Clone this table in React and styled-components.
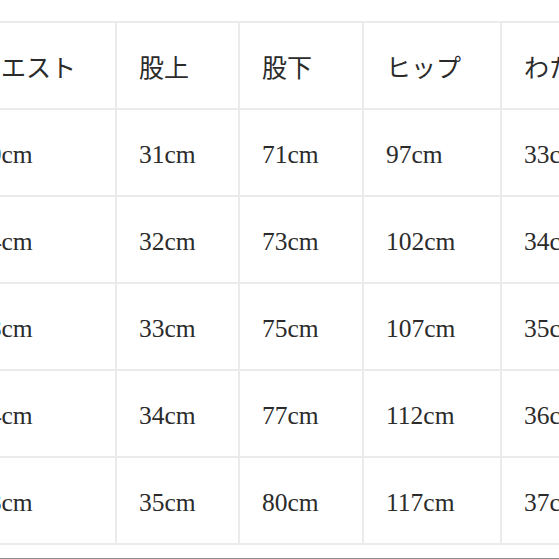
import React from "react";
import styled, { createGlobalStyle } from "styled-components";

const GlobalStyle = createGlobalStyle`
    html, body {
        margin: 0;
        padding: 0;
        background: #fff;
    }
    body {
        font-family: "Liberation Serif", "Noto Sans CJK JP", serif;
        color: #2b2b2b;
    }
`;

/* 画面全体：はみ出した列は切り落とす */
const Page = styled.div`
    width: 559px;
    height: 559px;
    overflow: hidden;
    padding-top: 21px;
    box-sizing: border-box;
`;

const Table = styled.div`
    display: grid;
    grid-template-columns: 163px 123px 124px 138px 170px;
    margin-left: -48px;
    width: max-content;
    border-top: 2px solid #ebebeb;
    border-left: 2px solid #ebebeb;
`;

const Cell = styled.div`
    height: 87px;
    display: flex;
    align-items: center;
    padding-left: 22px;
    padding-top: ${p => (p.$head ? "0" : "4px")};
    box-sizing: border-box;
    border-right: 2px solid #ebebeb;
    border-bottom: 2px solid #ebebeb;
    font-size: ${p => (p.$head ? "25px" : "25.5px")};
    font-family: ${p => (p.$head
        ? `"Noto Sans CJK JP", "Liberation Serif", sans-serif`
        : `"Liberation Serif", "Noto Sans CJK JP", serif`)};
    white-space: nowrap;
    overflow: hidden;
`;

const Rule = styled.div`
    margin-top: 13px;
    border-top: 1px solid #8c8c8c;
`;

const heads = ["ウエスト", "股上", "股下", "ヒップ", "わたり"];
const rows = [
    [69, 31, 71, 97, 33],
    [74, 32, 73, 102, 34],
    [78, 33, 75, 107, 35],
    [84, 34, 77, 112, 36],
    [88, 35, 80, 117, 37],
];

export default function App() {
    return <>
        <GlobalStyle />
        <Page>
            <Table>
                {heads.map(h => <Cell key={h} $head>{h}</Cell>)}
                {rows.map((r, i) => r.map((v, j) => (
                    <Cell key={i + "-" + j}>{v}cm</Cell>
                )))}
            </Table>
            <Rule />
        </Page>
    </>;
}
